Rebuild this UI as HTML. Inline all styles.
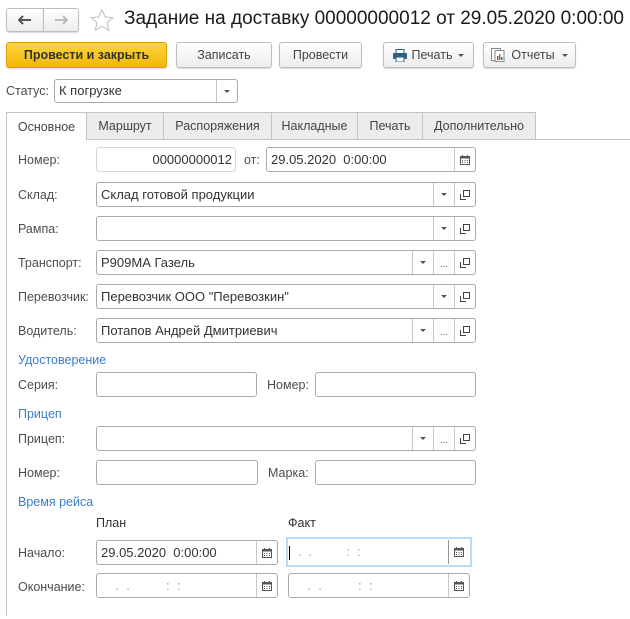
<!DOCTYPE html>
<html><head><meta charset="utf-8"><style>
*{box-sizing:border-box;margin:0;padding:0}
body{width:630px;height:619px;background:#fff;font-family:"Liberation Sans",Arial,sans-serif;font-size:12.5px;color:#4d4d4d;position:relative;overflow:hidden}
.a{position:absolute}
.btn{position:absolute;height:26px;border:1px solid #bdbdbd;border-radius:3px;background:linear-gradient(#fff,#ececec);box-shadow:0 1px 1px rgba(0,0,0,.15);color:#444;font-size:12.5px;display:flex;align-items:center;justify-content:center}
.f{position:absolute;height:25px;border:1px solid #a9a9a9;border-radius:3px;background:#fff;color:#333;font-size:13px;line-height:23px;padding-left:4px;white-space:nowrap}
.lb{position:absolute;font-size:12.5px;color:#4d4d4d}
.h{position:absolute;color:#3d7cc9;font-size:12.5px}
.sb{position:absolute;top:0;bottom:0;width:21px;border-left:1px solid #c8c8c8;display:flex;align-items:center;justify-content:center}
.tri{width:0;height:0;border-left:3.5px solid transparent;border-right:3.5px solid transparent;border-top:3.5px solid #555}
.tab{position:absolute;top:112px;height:27px;border:1px solid #c4c4c4;border-bottom:none;background:#ececec;color:#444;font-size:12.5px;display:flex;align-items:center;justify-content:center}
</style></head><body>
<svg width="0" height="0" style="position:absolute"><defs>
<symbol id="cal" viewBox="0 0 10 10"><rect x="0.5" y="1.5" width="9" height="8" fill="none" stroke="#555"/><rect x="0.5" y="1.5" width="9" height="2" fill="#555"/><rect x="2" y="0" width="1" height="2" fill="#555"/><rect x="7" y="0" width="1" height="2" fill="#555"/><g fill="#555"><rect x="2" y="5" width="1" height="1"/><rect x="4.5" y="5" width="1" height="1"/><rect x="7" y="5" width="1" height="1"/><rect x="2" y="7" width="1" height="1"/><rect x="4.5" y="7" width="1" height="1"/><rect x="7" y="7" width="1" height="1"/></g></symbol>
<symbol id="op" viewBox="0 0 10 10"><rect x="3.5" y="0.5" width="6" height="6" fill="none" stroke="#444"/><path d="M0.5 4v5.5H6" fill="none" stroke="#444"/></symbol>
</defs></svg>

<div class="btn" style="left:6px;top:8px;width:38px;height:24px;border-radius:3px 0 0 3px"><svg width="14" height="10"><path d="M1 5h12M5 1L1 5l4 4" stroke="#555" stroke-width="2" fill="none"/></svg></div>
<div class="btn" style="left:43px;top:8px;width:36px;height:24px;border-radius:0 3px 3px 0"><svg width="14" height="10"><path d="M1 5h12M9 1l4 4-4 4" stroke="#bbb" stroke-width="2" fill="none"/></svg></div>
<svg class="a" style="left:90px;top:9px" width="24" height="23" viewBox="0 0 24 23"><path d="M12 1l3.2 7 7.6.7-5.8 5 1.8 7.5L12 17.3 5.2 21.2 7 13.7 1.2 8.7 8.8 8z" fill="none" stroke="#c8c8c8" stroke-width="1.2"/></svg>
<div class="a" style="left:124px;top:8px;font-size:19px;color:#1a1a1a;white-space:nowrap">Задание на доставку 00000000012 от 29.05.2020 0:00:00</div>

<div class="btn" style="left:6px;top:42px;width:161px;background:linear-gradient(#fcd542,#f2b705);border-color:#d9a400;color:#333;font-weight:bold">Провести и закрыть</div>
<div class="btn" style="left:176px;top:42px;width:96px">Записать</div>
<div class="btn" style="left:279px;top:42px;width:83px">Провести</div>
<div class="btn" style="left:383px;top:42px;width:91px"><svg width="14" height="13" style="margin-right:5px"><rect x="3" y="0.5" width="8" height="4" fill="#fff" stroke="#2d5f8d"/><rect x="0" y="4" width="14" height="6" rx="1" fill="#2d5f8d"/><rect x="3" y="8" width="8" height="5" fill="#fff" stroke="#2d5f8d"/></svg>Печать<span class="tri" style="margin-left:6px"></span></div>
<div class="btn" style="left:483px;top:42px;width:93px"><svg width="14" height="14" style="margin-right:6px"><rect x="0.5" y="0.5" width="9" height="12" fill="#fff" stroke="#888"/><rect x="4" y="2.5" width="9" height="11" fill="#fff" stroke="#888"/><rect x="6" y="8" width="1.5" height="4" fill="#d33"/><rect x="8" y="6" width="1.5" height="6" fill="#3a3"/><rect x="10" y="9" width="1.5" height="3" fill="#36c"/></svg>Отчеты<span class="tri" style="margin-left:7px"></span></div>

<div class="lb" style="left:6px;top:84px">Статус:</div>
<div class="f" style="left:54px;top:79px;width:184px;height:24px;line-height:22px">К погрузке<div class="sb" style="right:0"><span class="tri"></span></div></div>

<div class="a" style="left:6px;top:139px;width:624px;border-top:1px solid #c4c4c4"></div>
<div class="a" style="left:6px;top:139px;height:477px;border-left:1px solid #c4c4c4"></div>
<div class="tab" style="left:6px;width:81px;background:#fff;height:28px">Основное</div>
<div class="tab" style="left:86px;width:78px">Маршрут</div>
<div class="tab" style="left:163px;width:109px">Распоряжения</div>
<div class="tab" style="left:271px;width:87px">Накладные</div>
<div class="tab" style="left:357px;width:66px">Печать</div>
<div class="tab" style="left:422px;width:114px">Дополнительно</div>

<div class="lb" style="left:18px;top:153px">Номер:</div>
<div class="f" style="left:96px;top:147px;width:140px;border-color:#d8d8d8;text-align:right;padding-right:3px">00000000012</div>
<div class="lb" style="left:244px;top:153px">от:</div>
<div class="f" style="left:266px;top:147px;width:210px">29.05.2020&nbsp; 0:00:00<div class="sb" style="right:0"><svg width="10" height="10"><use href="#cal"/></svg></div></div>

<div class="lb" style="left:18px;top:188px">Склад:</div>
<div class="f" style="left:96px;top:182px;width:380px">Склад готовой продукции<div class="sb" style="right:21px"><span class="tri"></span></div><div class="sb" style="right:0"><svg width="10" height="10"><use href="#op"/></svg></div></div>

<div class="lb" style="left:18px;top:222px">Рампа:</div>
<div class="f" style="left:96px;top:216px;width:380px"><div class="sb" style="right:21px"><span class="tri"></span></div><div class="sb" style="right:0"><svg width="10" height="10"><use href="#op"/></svg></div></div>

<div class="lb" style="left:18px;top:256px">Транспорт:</div>
<div class="f" style="left:96px;top:250px;width:380px">Р909МА Газель<div class="sb" style="right:42px"><span class="tri"></span></div><div class="sb" style="right:21px;color:#666;font-size:10px;padding-top:3px">...</div><div class="sb" style="right:0"><svg width="10" height="10"><use href="#op"/></svg></div></div>

<div class="lb" style="left:18px;top:290px">Перевозчик:</div>
<div class="f" style="left:96px;top:284px;width:380px">Перевозчик ООО "Перевозкин"<div class="sb" style="right:21px"><span class="tri"></span></div><div class="sb" style="right:0"><svg width="10" height="10"><use href="#op"/></svg></div></div>

<div class="lb" style="left:18px;top:324px">Водитель:</div>
<div class="f" style="left:96px;top:318px;width:380px">Потапов Андрей Дмитриевич<div class="sb" style="right:42px"><span class="tri"></span></div><div class="sb" style="right:21px;color:#666;font-size:10px;padding-top:3px">...</div><div class="sb" style="right:0"><svg width="10" height="10"><use href="#op"/></svg></div></div>

<div class="h" style="left:18px;top:353px">Удостоверение</div>
<div class="lb" style="left:18px;top:378px">Серия:</div>
<div class="f" style="left:96px;top:372px;width:161px"></div>
<div class="lb" style="left:267px;top:378px">Номер:</div>
<div class="f" style="left:315px;top:372px;width:161px"></div>

<div class="h" style="left:18px;top:407px">Прицеп</div>
<div class="lb" style="left:18px;top:432px">Прицеп:</div>
<div class="f" style="left:96px;top:426px;width:380px"><div class="sb" style="right:42px"><span class="tri"></span></div><div class="sb" style="right:21px;color:#666;font-size:10px;padding-top:3px">...</div><div class="sb" style="right:0"><svg width="10" height="10"><use href="#op"/></svg></div></div>

<div class="lb" style="left:18px;top:466px">Номер:</div>
<div class="f" style="left:96px;top:460px;width:162px"></div>
<div class="lb" style="left:268px;top:466px">Марка:</div>
<div class="f" style="left:315px;top:460px;width:161px"></div>

<div class="h" style="left:18px;top:495px">Время рейса</div>
<div class="lb" style="left:96px;top:516px;color:#333">План</div>
<div class="lb" style="left:288px;top:516px;color:#333">Факт</div>

<div class="lb" style="left:18px;top:546px">Начало:</div>
<div class="f" style="left:96px;top:540px;width:182px">29.05.2020&nbsp; 0:00:00<div class="sb" style="right:0"><svg width="10" height="10"><use href="#cal"/></svg></div></div>
<div class="a" style="left:286px;top:537px;width:186px;height:30px;border:2px solid #b9dcf5"></div>
<div class="a" style="left:289px;top:540px;width:180px;height:24px;background:#fff;font-size:12.5px;line-height:24px;color:#8ab">
<span style="display:inline-block;width:1px;height:14px;background:#000;vertical-align:middle;margin-right:8px"></span>.&nbsp; .&nbsp;&nbsp;&nbsp;&nbsp;&nbsp;&nbsp;&nbsp;&nbsp;&nbsp; :&nbsp; :
<div class="sb" style="right:0;border-color:#999"><svg width="10" height="10"><use href="#cal"/></svg></div></div>

<div class="lb" style="left:18px;top:580px">Окончание:</div>
<div class="f" style="left:96px;top:573px;width:182px;color:#8ab">&nbsp;&nbsp;&nbsp; .&nbsp; .&nbsp;&nbsp;&nbsp;&nbsp;&nbsp;&nbsp;&nbsp;&nbsp;&nbsp; :&nbsp; :<div class="sb" style="right:0"><svg width="10" height="10"><use href="#cal"/></svg></div></div>
<div class="f" style="left:288px;top:573px;width:182px;color:#8ab">&nbsp;&nbsp;&nbsp; .&nbsp; .&nbsp;&nbsp;&nbsp;&nbsp;&nbsp;&nbsp;&nbsp;&nbsp;&nbsp; :&nbsp; :<div class="sb" style="right:0"><svg width="10" height="10"><use href="#cal"/></svg></div></div>
</body></html>
